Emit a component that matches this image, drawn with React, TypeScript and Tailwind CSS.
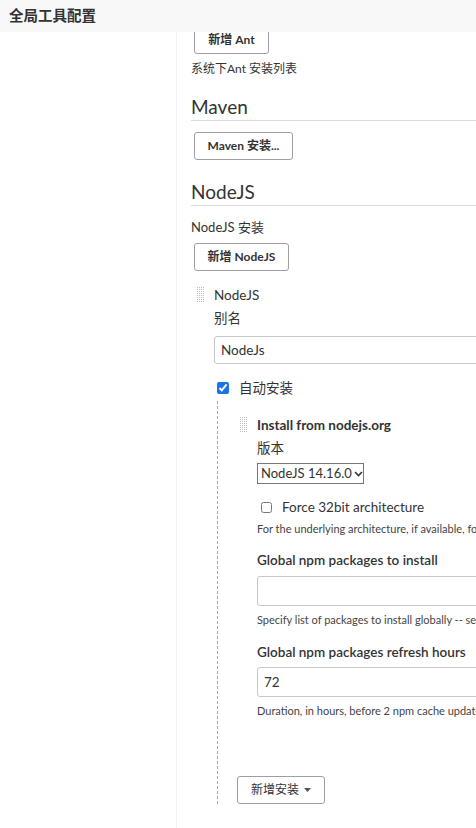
import React from "react";

function Grip() {
  const dots = [];
  for (let r = 0; r < 8; r++) {
    for (let c = 0; c < 4; c++) {
      dots.push(<rect key={`${r}-${c}`} x={c * 2} y={r * 2} width="1" height="1" fill="#bdbdbd" />);
    }
  }
  return (
    <svg width="8" height="16" viewBox="0 0 8 16" className="shrink-0">
      {dots}
    </svg>
  );
}

function Btn({ children, className = "" }: { children: React.ReactNode; className?: string }) {
  return (
    <button
      className={`flex items-center justify-center h-[28px] rounded-[3px] border border-[#9aa0a6] bg-white text-[12px] font-bold text-[#333] whitespace-nowrap ${className}`}
    >
      {children}
    </button>
  );
}

export default function App() {
  return (
    <div className="w-[476px] h-[828px] overflow-hidden bg-white text-[#333] flex flex-col" style={{ fontFamily: 'Lato, "Noto Sans CJK SC", sans-serif' }}>
      <div className="h-[32px] shrink-0 bg-[#f8f8f8] flex items-center pl-[9px] text-[14.5px] font-bold text-[#333] relative z-10">
        全局工具配置
      </div>
      <div className="flex flex-1 min-h-0">
        <div className="w-[177px] shrink-0 border-r border-[#eef0f2]" />
        <div className="flex-1 min-w-0 pl-[14px] overflow-hidden">
          <div className="w-[500px]">
            <Btn className="-mt-[6px] ml-[3px] w-[75px]">新增 Ant</Btn>
            <div className="text-[12px] mt-[6px] leading-[18px]">系统下Ant 安装列表</div>

            <div className="mt-[17px] text-[19px] leading-[24px] border-b border-[#dcdcdc] pb-[1px]">Maven</div>
            <Btn className="mt-[11px] ml-[3px] w-[99px]">Maven 安装...</Btn>

            <div className="mt-[20px] text-[19px] leading-[24px] border-b border-[#dcdcdc] pb-[1px]">NodeJS</div>
            <div className="mt-[12px] text-[13px] leading-[18px]">NodeJS 安装</div>
            <Btn className="mt-[7px] ml-[3px] w-[95px]">新增 NodeJS</Btn>

            <div className="mt-[15px] flex">
              <div className="ml-[6px] w-[17px] shrink-0 pt-[1px]">
                <Grip />
              </div>
              <div className="flex-1">
                <div className="text-[13.5px] leading-[18px]">NodeJS</div>
                <div className="mt-[5px] text-[13.5px] leading-[18px]">别名</div>
                <div className="mt-[9px] h-[28px] border border-[#c8c8c8] rounded-[3px] flex items-center pl-[6px] text-[13.5px]">NodeJs</div>

                <div className="mt-[15px] flex items-center h-[18px]">
                  <input type="checkbox" defaultChecked className="w-[12px] h-[12px] m-0 ml-[3px] accent-[#1a73e8]" />
                  <span className="ml-[10px] text-[13.5px] leading-[18px]">自动安装</span>
                </div>

                <div className="mt-[4px] ml-[3px] border-l border-dashed border-[#a8a8a8] pl-[22px] pt-[15px]">
                  <div className="flex">
                    <div className="w-[17px] shrink-0 pt-[1px]">
                      <Grip />
                    </div>
                    <div className="flex-1">
                      <div className="text-[13.5px] font-bold leading-[18px]">Install from nodejs.org</div>
                      <div className="mt-[5px] text-[13.5px] leading-[18px]">版本</div>
                      <div className="mt-[6px] w-[107px] h-[21px] border border-[#777] flex items-center pl-[3px] text-[13px] leading-none whitespace-nowrap">
                        <span>NodeJS 14.16.0</span>
                        <svg width="9" height="6" viewBox="0 0 9 6" className="ml-[2px] shrink-0">
                          <path d="M1 1l3.5 3.5L8 1" stroke="#333" strokeWidth="1.6" fill="none" />
                        </svg>
                      </div>
                      <div className="mt-[14px] flex items-center h-[18px]">
                        <input type="checkbox" className="w-[11px] h-[11px] m-0 ml-[4px]" />
                        <span className="ml-[10px] text-[13.5px] leading-[18px]">Force 32bit architecture</span>
                      </div>
                      <div className="mt-[5px] text-[11px] leading-[16px] text-[#444] whitespace-nowrap">For the underlying architecture, if available, force the installation of the 32bit package.</div>

                      <div className="mt-[14px] text-[13.5px] font-semibold leading-[18px]">Global npm packages to install</div>
                      <div className="mt-[7px] h-[30px] border border-[#c8c8c8] rounded-[3px]" />
                      <div className="mt-[6px] text-[11px] leading-[16px] text-[#444] whitespace-nowrap">Specify list of packages to install globally -- see npm install -g.</div>

                      <div className="mt-[15px] text-[13.5px] font-semibold leading-[18px]">Global npm packages refresh hours</div>
                      <div className="mt-[6px] h-[30px] border border-[#c8c8c8] rounded-[3px] flex items-center pl-[6px] text-[13.5px]">72</div>
                      <div className="mt-[6px] text-[11px] leading-[16px] text-[#444] whitespace-nowrap">Duration, in hours, before 2 npm cache update.</div>
                    </div>
                  </div>
                  <Btn className="mt-[57px] -ml-[3px] w-[88px] font-normal">
                    <span className="inline-flex items-center gap-[5px]">
                      新增安装
                      <svg width="7" height="4" viewBox="0 0 7 4">
                        <path d="M0 0h7L3.5 4z" fill="#555" />
                      </svg>
                    </span>
                  </Btn>
                </div>
              </div>
            </div>
          </div>
        </div>
      </div>
    </div>
  );
}
